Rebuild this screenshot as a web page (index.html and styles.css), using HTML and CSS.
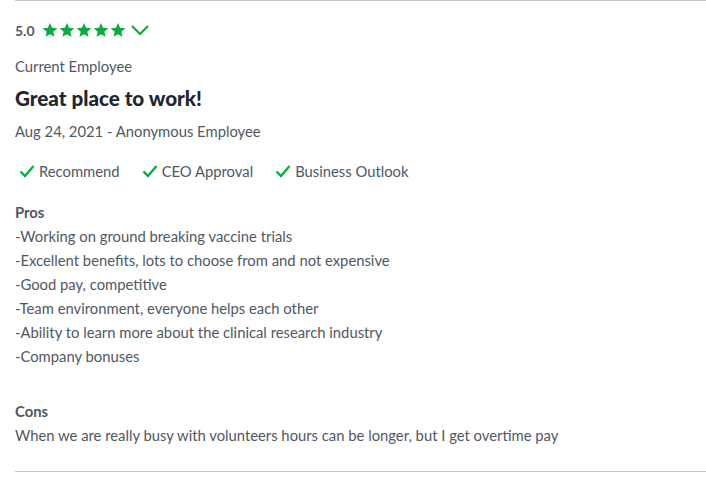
FILE: index.html
```html
<!DOCTYPE html>
<html>
<head>
<meta charset="utf-8">
<link rel="stylesheet" href="styles.css">
</head>
<body>
<div class="review">
  <div class="rating">
    <span class="score">5.0</span>
    <span class="stars">
      <svg viewBox="0 0 24 24" class="star"><path d="M12 1.5l3.1 7.3 7.9.6-6 5.2 1.8 7.7L12 18.2l-6.8 4.1 1.8-7.7-6-5.2 7.9-.6z"/></svg>
      <svg viewBox="0 0 24 24" class="star"><path d="M12 1.5l3.1 7.3 7.9.6-6 5.2 1.8 7.7L12 18.2l-6.8 4.1 1.8-7.7-6-5.2 7.9-.6z"/></svg>
      <svg viewBox="0 0 24 24" class="star"><path d="M12 1.5l3.1 7.3 7.9.6-6 5.2 1.8 7.7L12 18.2l-6.8 4.1 1.8-7.7-6-5.2 7.9-.6z"/></svg>
      <svg viewBox="0 0 24 24" class="star"><path d="M12 1.5l3.1 7.3 7.9.6-6 5.2 1.8 7.7L12 18.2l-6.8 4.1 1.8-7.7-6-5.2 7.9-.6z"/></svg>
      <svg viewBox="0 0 24 24" class="star"><path d="M12 1.5l3.1 7.3 7.9.6-6 5.2 1.8 7.7L12 18.2l-6.8 4.1 1.8-7.7-6-5.2 7.9-.6z"/></svg>
    </span>
    <svg viewBox="0 0 20 14" class="chevron"><path d="M2 3l8 8 8-8"/></svg>
  </div>
  <div class="status">Current Employee</div>
  <h2 class="title">Great place to work!</h2>
  <div class="meta">Aug 24, 2021 - Anonymous Employee</div>
  <div class="checks">
    <span class="check"><svg viewBox="0 0 16 14" class="tick"><path d="M1.5 7.5l4.5 4.5 8.5-10"/></svg>Recommend</span>
    <span class="check"><svg viewBox="0 0 16 14" class="tick"><path d="M1.5 7.5l4.5 4.5 8.5-10"/></svg>CEO Approval</span>
    <span class="check"><svg viewBox="0 0 16 14" class="tick"><path d="M1.5 7.5l4.5 4.5 8.5-10"/></svg>Business Outlook</span>
  </div>
  <div class="section">
    <div class="label">Pros</div>
    <div class="line">-Working on ground breaking vaccine trials</div>
    <div class="line">-Excellent benefits, lots to choose from and not expensive</div>
    <div class="line">-Good pay, competitive</div>
    <div class="line">-Team environment, everyone helps each other</div>
    <div class="line">-Ability to learn more about the clinical research industry</div>
    <div class="line">-Company bonuses</div>
  </div>
  <div class="section cons">
    <div class="label">Cons</div>
    <div class="line">When we are really busy with volunteers hours can be longer, but I get overtime pay</div>
  </div>
</div>
</body>
</html>
```
FILE: styles.css
```css
html, body {
  margin: 0;
  padding: 0;
  background: #fff;
}
body {
  font-family: Lato, "Liberation Sans", sans-serif;
  color: #505863;
  font-size: 14.8px;
}
.review {
  margin-left: 15px;
  width: 720px;
  border-top: 1px solid #c4c7cc;
  border-bottom: 1px solid #c4c7cc;
  padding-bottom: 24px;
}
.rating {
  display: flex;
  align-items: center;
  height: 20px;
  margin-top: 19px;
}
.score {
  font-size: 14px;
  font-weight: 700;
  color: #505863;
  margin-right: 7px;
}
.stars {
  display: flex;
  gap: 1px;
}
.star {
  width: 16px;
  height: 16px;
  fill: #0caa41;
}
.chevron {
  width: 20px;
  height: 14px;
  margin-left: 4px;
  fill: none;
  stroke: #0caa41;
  stroke-width: 2.2;
}
.status {
  margin-top: 16px;
  line-height: 20px;
}
.title {
  margin: 10px 0 0;
  font-size: 20.6px;
  line-height: 24px;
  font-weight: 900;
  color: #20262e;
}
.meta {
  margin-top: 11px;
  line-height: 20px;
}
.checks {
  display: flex;
  gap: 22px;
  margin-top: 20px;
  padding-left: 4px;
  line-height: 20px;
}
.check {
  display: flex;
  align-items: center;
}
.tick {
  width: 16px;
  height: 14px;
  margin-right: 4px;
  fill: none;
  stroke: #0caa41;
  stroke-width: 2.4;
}
.section {
  margin-top: 19px;
  line-height: 24px;
}
.section.cons {
  margin-top: 31px;
}
.label {
  font-weight: 700;
}
```
